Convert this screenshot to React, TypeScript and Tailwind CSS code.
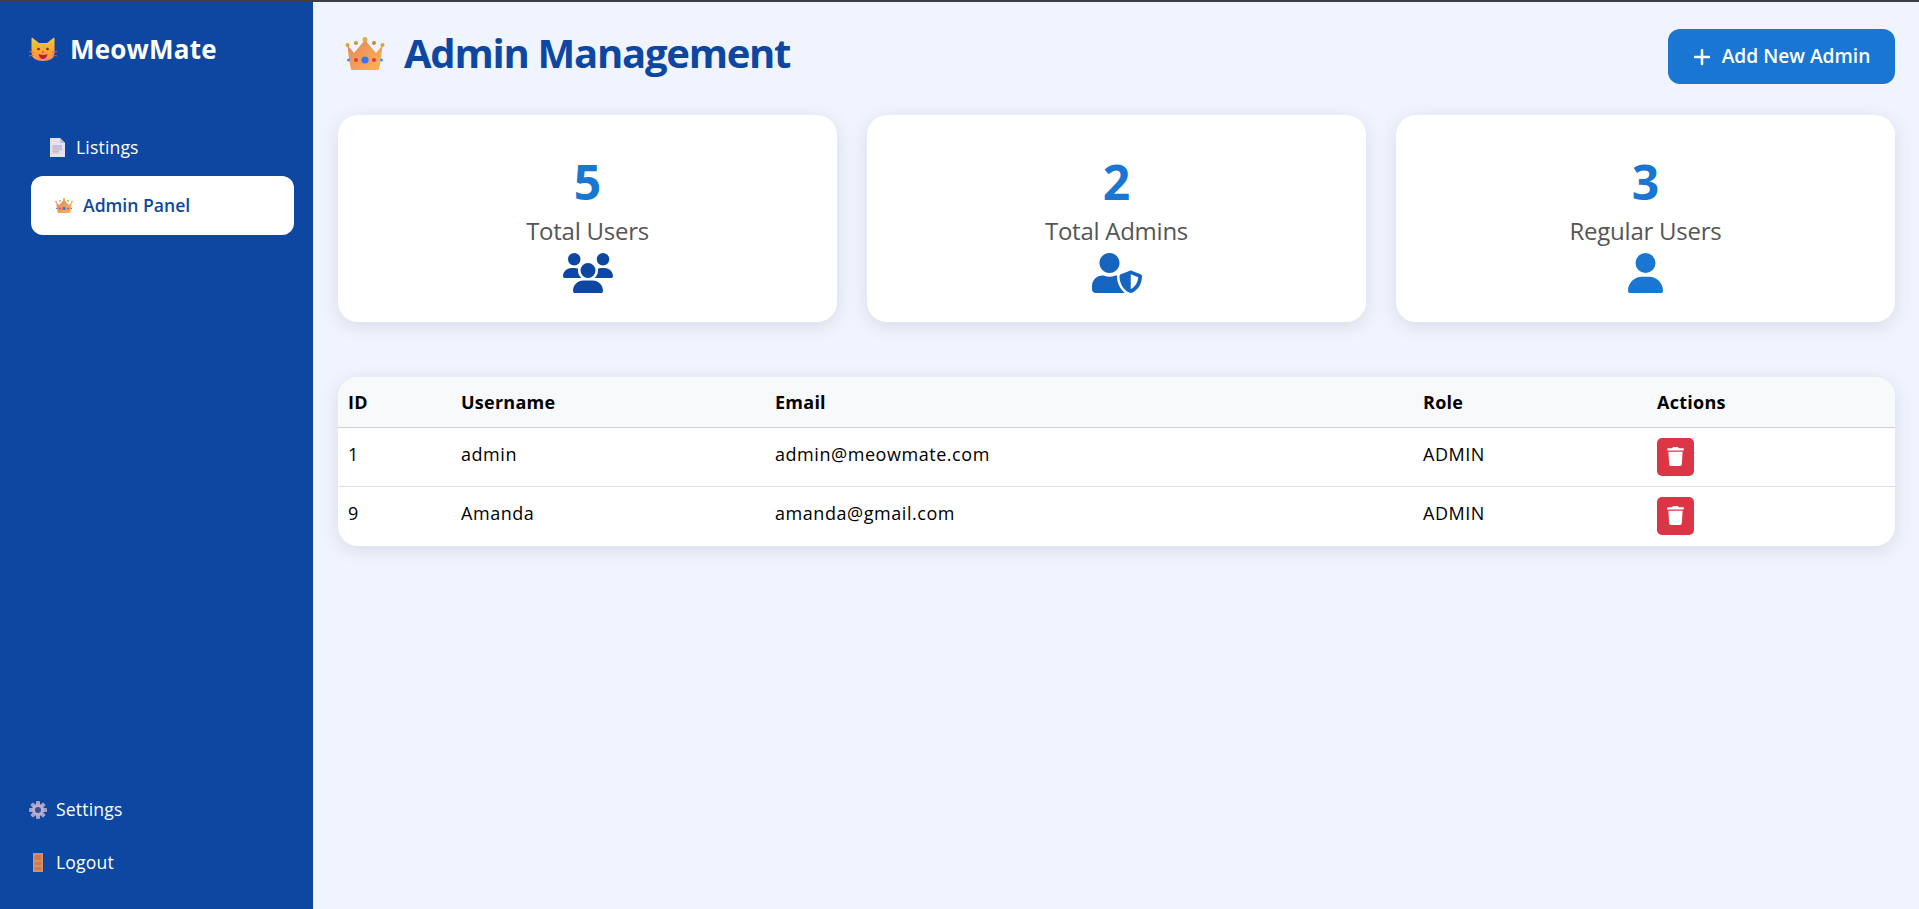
import { FaTrash, FaUserShield } from 'react-icons/fa';
import { FaPlus, FaUser, FaUsers } from 'react-icons/fa6';

function CatEmoji() {
  return (
    <svg viewBox="0 0 28 26" className="h-[26px] w-[28px]">
      <defs>
        <linearGradient id="catFill" x1="0" y1="0" x2="0" y2="1">
          <stop offset="0" stopColor="#ffc83d" />
          <stop offset="0.6" stopColor="#ffa42e" />
          <stop offset="1" stopColor="#ff8a6a" />
        </linearGradient>
      </defs>
      <path d="M3 1.5 L10 7 H18 L25 1.5 Q25.5 1.5 25.5 3 V17 Q25 25 14 25 Q3 25 2.5 17 V3 Q2.5 1.5 3 1.5 Z" fill="url(#catFill)" />
      <circle cx="9.5" cy="13" r="1.3" fill="#5d3a1a" />
      <circle cx="18.5" cy="13" r="1.3" fill="#5d3a1a" />
      <circle cx="14" cy="16" r="1" fill="#e0457b" />
      <path d="M9.5 18 Q14 20 18.5 18 Q17.5 23 14 23 Q10.5 23 9.5 18 Z" fill="#a8273f" />
      <path d="M0 15.5 L5 16.5 M0 20 L5 19 M28 15.5 L23 16.5 M28 20 L23 19" stroke="#d9703c" strokeWidth="0.9" />
    </svg>
  );
}

function DocEmoji() {
  return (
    <svg viewBox="0 0 15 19" className="h-[19px] w-[15px]">
      <path d="M0 0 H10 L15 5 V19 H0 Z" fill="#e6e0f0" />
      <path d="M10 0 L15 5 H10 Z" fill="#c4bdd6" />
      <path d="M2.5 7 H12 V12.5 H9 V15.5 H2.5 Z" fill="#cdc7da" />
      <path d="M2.5 8.5 H12 M2.5 11 H12 M2.5 13.5 H9" stroke="#b9b3c8" strokeWidth="0.6" />
    </svg>
  );
}

function CrownEmoji({ className, id }: { className: string; id: string }) {
  return (
    <svg viewBox="0 0 40 33" className={className}>
      <defs>
        <linearGradient id={id} x1="0" y1="0" x2="1" y2="1">
          <stop offset="0" stopColor="#e0875a" />
          <stop offset="1" stopColor="#ffb454" />
        </linearGradient>
      </defs>
      <circle cx="2.5" cy="8" r="2" fill="#d9a42f" />
      <circle cx="11" cy="6" r="2" fill="#c9992c" />
      <circle cx="20" cy="2.5" r="2.5" fill="#e0b23a" />
      <circle cx="29" cy="6" r="2" fill="#b8912a" />
      <circle cx="37.5" cy="8" r="2" fill="#d9a42f" />
      <path d="M2.5 8 L9 16 L20 3 L31 16 L37.5 8 Q36 24 34 32 Q34 33 33 33 H7 Q6 33 6 32 Q4 24 2.5 8 Z" fill={`url(#${id})`} />
      <circle cx="3.5" cy="23" r="1.5" fill="#3f8cf5" />
      <circle cx="36.5" cy="23" r="1.5" fill="#3f8cf5" />
      <circle cx="11" cy="23" r="2" fill="#f0304f" />
      <circle cx="29" cy="23" r="2" fill="#f0304f" />
      <circle cx="20" cy="23" r="3.6" fill="#3a74ee" />
    </svg>
  );
}

function GearEmoji() {
  return (
    <svg viewBox="0 0 18 18" className="h-[18px] w-[18px]">
      <g fill="#a8a2c4">
        <rect x="7" y="0" width="4" height="18" rx="1" />
        <rect x="7" y="0" width="4" height="18" rx="1" transform="rotate(45 9 9)" />
        <rect x="7" y="0" width="4" height="18" rx="1" transform="rotate(90 9 9)" />
        <rect x="7" y="0" width="4" height="18" rx="1" transform="rotate(135 9 9)" />
      </g>
      <circle cx="9" cy="9" r="6" fill="#b6b0d0" />
      <circle cx="9" cy="9" r="3" fill="#3f4d8a" />
    </svg>
  );
}

function DoorEmoji() {
  return (
    <svg viewBox="0 0 10 19" className="h-[19px] w-[10px]">
      <rect width="10" height="19" fill="#d98e5f" />
      <path d="M2 2 H8 V7 H2 Z M2 9 H8 V12 H2 Z M2 14 H8 V17 H2 Z" fill="#c67c50" />
    </svg>
  );
}

const STATS = [
  { value: 5, label: 'Total Users', icon: <FaUsers className="h-[40px] w-[50px] text-[#0d47a1]" /> },
  { value: 2, label: 'Total Admins', icon: <FaUserShield className="h-[40px] w-[50px] text-[#1565c0]" /> },
  { value: 3, label: 'Regular Users', icon: <FaUser className="h-[40px] w-[35px] text-[#1976d2]" /> },
];

const ADMINS = [
  { id: 1, username: 'admin', email: 'admin@meowmate.com', role: 'ADMIN' },
  { id: 9, username: 'Amanda', email: 'amanda@gmail.com', role: 'ADMIN' },
];

export default function App() {
  return (
    <div className="flex h-[909px] flex-col overflow-hidden bg-[#f0f4ff] font-['Open_Sans','Liberation_Sans',sans-serif]">
      <div className="h-[2px] bg-[#3c4043]" />
      <div className="flex min-h-0 flex-1">
        <aside className="flex w-[313px] shrink-0 flex-col bg-[#0d47a1] text-white">
          <div className="flex h-[94px] items-center gap-[13px] pl-[29px]">
            <CatEmoji />
            <span className="text-[26px] font-bold leading-none tracking-[0.2px]">MeowMate</span>
          </div>
          <nav className="mt-[27px] flex flex-col">
            <a className="flex h-[48px] items-center gap-[11px] pl-[50px] text-[17.6px] tracking-[0.15px]">
              <DocEmoji />
              <span>Listings</span>
            </a>
            <a className="ml-[31px] mr-[19px] mt-[5px] flex h-[59px] items-center gap-[10px] rounded-[12px] bg-white pl-[24px] text-[17.6px] font-semibold text-[#0d47a1]">
              <CrownEmoji className="h-[15px] w-[18px]" id="crownSmall" />
              <span>Admin Panel</span>
            </a>
          </nav>
          <div className="mt-auto flex flex-col pb-[20px]">
            <a className="flex h-[53px] items-center gap-[9px] pl-[29px] text-[17.6px] tracking-[0.15px]">
              <GearEmoji />
              <span>Settings</span>
            </a>
            <a className="flex h-[53px] items-center gap-[9px] pl-[33px] text-[17.6px] tracking-[0.15px]">
              <DoorEmoji />
              <span className="ml-[4px]">Logout</span>
            </a>
          </div>
        </aside>
        <main className="min-w-0 flex-1 pl-[25px] pr-[24px]">
          <header className="flex h-[113px] items-start justify-between">
            <div className="box-content flex h-[50px] items-center gap-[19px] pl-[7px] pt-[26px]">
              <CrownEmoji className="h-[33px] w-[40px]" id="crownLarge" />
              <h1 className="text-[40px] font-bold leading-none tracking-[-1.25px] text-[#0d47a1]">Admin Management</h1>
            </div>
            <button className="mt-[27px] flex h-[55px] w-[227px] items-center justify-center gap-[11px] rounded-[12px] bg-[#1976d2] text-[19.2px] font-semibold text-white">
              <FaPlus className="h-[20px] w-[18px]" />
              <span>Add New Admin</span>
            </button>
          </header>
          <section className="grid grid-cols-3 gap-[30px]">
            {STATS.map((s) => (
              <div
                key={s.label}
                className="flex h-[207px] flex-col items-center rounded-[20px] bg-white pt-[39px] shadow-[0_4px_20px_rgba(0,0,0,0.1)]"
              >
                <div className="text-[48px] font-bold leading-[56px] text-[#1976d2]">{s.value}</div>
                <div className="mt-[5px] text-[24px] font-medium leading-[32px] tracking-[-0.25px] text-[#555]">{s.label}</div>
                <div className="mt-[6px]">{s.icon}</div>
              </div>
            ))}
          </section>
          <section className="mt-[55px] overflow-hidden rounded-[20px] bg-white shadow-[0_4px_20px_rgba(0,0,0,0.1)]">
            <table className="w-full table-fixed border-collapse text-left text-[18px] tracking-[0.55px] text-black">
              <colgroup>
                <col className="w-[113px]" />
                <col className="w-[314px]" />
                <col className="w-[648px]" />
                <col className="w-[234px]" />
                <col />
              </colgroup>
              <thead>
                <tr className="h-[50px] border-b border-[#cfd0d8] bg-[#f8f9fa]">
                  <th className="px-[10px] pt-[2px] font-bold tracking-[0.25px]">ID</th>
                  <th className="px-[10px] pt-[2px] font-bold tracking-[0.25px]">Username</th>
                  <th className="px-[10px] pt-[2px] font-bold tracking-[0.25px]">Email</th>
                  <th className="px-[10px] pt-[2px] font-bold tracking-[0.25px]">Role</th>
                  <th className="px-[10px] pt-[2px] font-bold tracking-[0.25px]">Actions</th>
                </tr>
              </thead>
              <tbody>
                {ADMINS.map((a, i) => (
                  <tr key={a.id} className={i === 0 ? 'border-b border-[#e0e0e8]' : ''}>
                    <td className="px-[10px] pt-[10px] align-top leading-[32px]">{a.id}</td>
                    <td className="px-[10px] pt-[10px] align-top leading-[32px]">{a.username}</td>
                    <td className="px-[10px] pt-[10px] align-top leading-[32px]">{a.email}</td>
                    <td className="px-[10px] pt-[10px] align-top leading-[32px]">{a.role}</td>
                    <td className={i === 0 ? 'px-[10px] py-[10px] align-top' : 'px-[10px] pb-[11px] pt-[10px] align-top'}>
                      <button className="flex h-[38px] w-[37px] items-center justify-center rounded-[5px] bg-[#dc3545] text-white">
                        <FaTrash className="h-[19px] w-[17px]" />
                      </button>
                    </td>
                  </tr>
                ))}
              </tbody>
            </table>
          </section>
        </main>
      </div>
    </div>
  );
}
